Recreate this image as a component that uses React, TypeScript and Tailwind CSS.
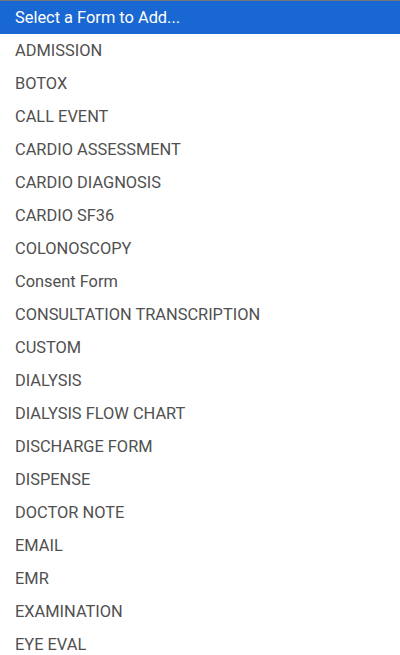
import React from "react";

const items = [
  "ADMISSION",
  "BOTOX",
  "CALL EVENT",
  "CARDIO ASSESSMENT",
  "CARDIO DIAGNOSIS",
  "CARDIO SF36",
  "COLONOSCOPY",
  "Consent Form",
  "CONSULTATION TRANSCRIPTION",
  "CUSTOM",
  "DIALYSIS",
  "DIALYSIS FLOW CHART",
  "DISCHARGE FORM",
  "DISPENSE",
  "DOCTOR NOTE",
  "EMAIL",
  "EMR",
  "EXAMINATION",
  "EYE EVAL",
];

export default function App() {
  return (
    <div
      className="w-[400px] h-[655px] overflow-hidden bg-white border-t border-[#767676] text-[16.4px]"
      style={{ fontFamily: "Roboto, Lato, sans-serif" }}
    >
      <div className="h-[33px] flex items-center pl-[15px] pt-[2px] bg-[#1967d2] text-white">
        Select a Form to Add...
      </div>
      {items.map((t) => (
        <div key={t} className="h-[33px] flex items-center pl-[15px] pt-[2px] text-[#505050]">
          {t}
        </div>
      ))}
    </div>
  );
}
